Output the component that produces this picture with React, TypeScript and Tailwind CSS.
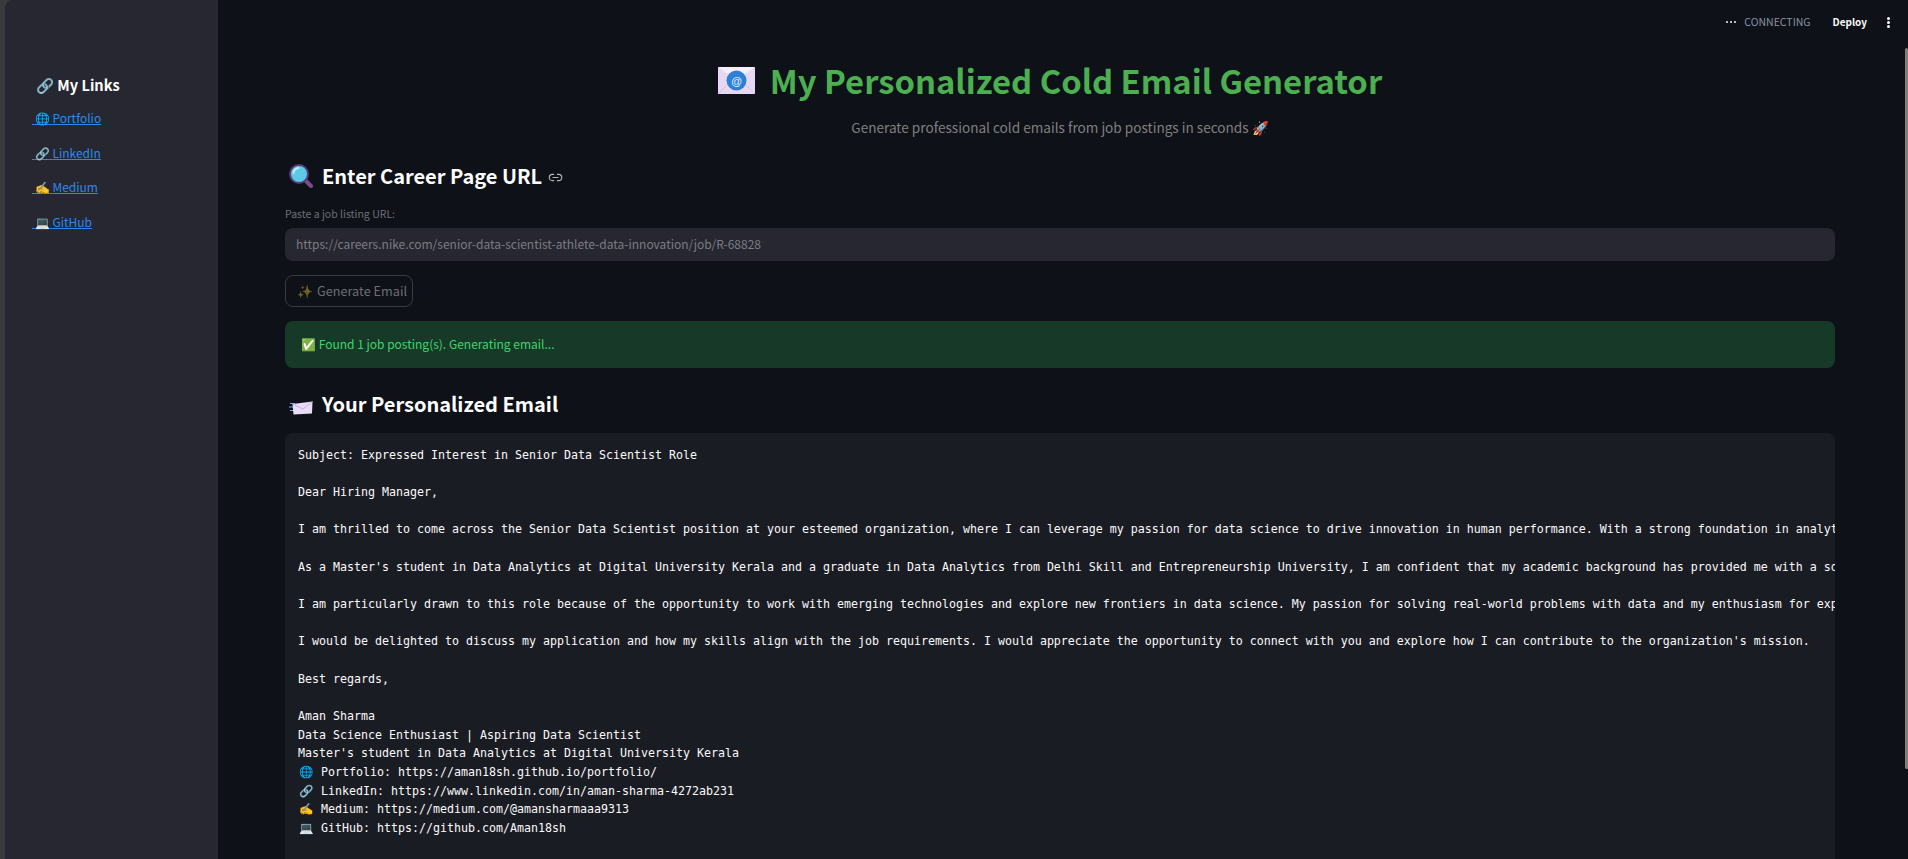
import { Link2 } from "lucide-react";

const sans = "font-['Noto_Sans_CJK_SC','Noto_Sans',sans-serif]";

const links = [
  ["🌐", "Portfolio"],
  ["🔗", "LinkedIn"],
  ["✍️", "Medium"],
  ["💻", "GitHub"],
];

const emailLines = [
  "Subject: Expressed Interest in Senior Data Scientist Role",
  "",
  "Dear Hiring Manager,",
  "",
  "I am thrilled to come across the Senior Data Scientist position at your esteemed organization, where I can leverage my passion for data science to drive innovation in human performance. With a strong foundation in analytics and machine learning, I am excited about this role.",
  "",
  "As a Master's student in Data Analytics at Digital University Kerala and a graduate in Data Analytics from Delhi Skill and Entrepreneurship University, I am confident that my academic background has provided me with a solid foundation for this position.",
  "",
  "I am particularly drawn to this role because of the opportunity to work with emerging technologies and explore new frontiers in data science. My passion for solving real-world problems with data and my enthusiasm for exploring new tools make me a strong fit.",
  "",
  "I would be delighted to discuss my application and how my skills align with the job requirements. I would appreciate the opportunity to connect with you and explore how I can contribute to the organization's mission.",
  "",
  "Best regards,",
  "",
  "Aman Sharma",
  "Data Science Enthusiast | Aspiring Data Scientist",
  "Master's student in Data Analytics at Digital University Kerala",
];

const signature = [
  ["🌐", "Portfolio: https://aman18sh.github.io/portfolio/"],
  ["🔗", "LinkedIn: https://www.linkedin.com/in/aman-sharma-4272ab231"],
  ["✍️", "Medium: https://medium.com/@amansharmaaa9313"],
  ["💻", "GitHub: https://github.com/Aman18sh"],
];

// envelope with the blue @ badge, next to the title
const MailIcon = () => (
  <svg width="37" height="27" viewBox="0 0 37 27" className="shrink-0">
    <rect x="0" y="0" width="37" height="27" rx="1" fill="#e6d8f3" />
    <path d="M0 0L18.5 13L37 0Z" fill="#f5effa" />
    <path d="M0 27L14 13M37 27L23 13" stroke="#d3c0e6" strokeWidth="1" />
    <circle cx="18.5" cy="13.5" r="10" fill="#2f7fd6" />
    <text x="18.5" y="17.5" textAnchor="middle" fontSize="11" fontFamily="Liberation Sans, sans-serif" fill="#d8ecff">@</text>
  </svg>
);

const SearchIcon = () => (
  <svg width="24" height="24" viewBox="0 0 24 24" className="shrink-0">
    <path d="M15.5 15.5L22 22" stroke="#7d4a8f" strokeWidth="4" strokeLinecap="round" />
    <circle cx="10" cy="10" r="9" fill="#5cc9e8" stroke="#5a3a78" strokeWidth="2" />
    <path d="M4.5 9a5.5 5.5 0 0 1 5-5" stroke="#bdeefa" strokeWidth="2" fill="none" strokeLinecap="round" />
  </svg>
);

// envelope with speed lines, second heading
const FastMailIcon = () => (
  <svg width="24" height="14" viewBox="0 0 24 14" className="shrink-0">
    <path d="M1 2.5h5M0 6h5M1 9.5h4" stroke="#4fb3e8" strokeWidth="1.2" />
    <path d="M3.5 3L23.5 0.5L23 12.5L4.5 13.5Z" fill="#eadcf6" />
    <path d="M3.5 3L14 8L23.5 0.5" stroke="#c7aede" strokeWidth="1" fill="none" />
  </svg>
);

export default function App() {
  return (
    <div className={`flex h-[859px] overflow-hidden bg-[#3a3a3c] pl-[5px] ${sans}`}>
      <aside className="w-[213px] shrink-0 pl-[26px] pt-[73px] bg-[#262730] rounded-tl-lg">
        <h3 className="pl-[5px] text-[14.6px] leading-[24px] font-semibold text-white">🔗 My Links</h3>
        <ul className="mt-[9px] flex flex-col gap-[10.7px]">
          {links.map(([icon, label]) => (
            <li key={label} className="pl-[1px] text-[12px] leading-[24px] text-[#3087ee] underline">&nbsp;{icon}&nbsp;{label}</li>
          ))}
        </ul>
      </aside>
      <main className="relative flex-1 min-w-0 bg-[#0e1117] pl-[67px] pr-[73px] pt-[55px]">
        <div className="absolute right-[18px] top-[14px] flex items-center">
          <span className="mr-[8px] flex gap-[2px]">
            <i className="block size-[2px] bg-[#b8bcc6]" />
            <i className="block size-[2px] bg-[#b8bcc6]" />
            <i className="block size-[2px] bg-[#b8bcc6]" />
          </span>
          <span className="text-[10.5px] leading-[16px] text-[#8a93a5]">CONNECTING</span>
          <span className="ml-[22px] text-[10px] leading-[16px] font-semibold text-[#fafafa]">Deploy</span>
          <span className="ml-[20px] flex flex-col gap-[1px]">
            <i className="block size-[3px] rounded-full bg-[#fafafa]" />
            <i className="block size-[3px] rounded-full bg-[#fafafa]" />
            <i className="block size-[3px] rounded-full bg-[#fafafa]" />
          </span>
        </div>
        <div className="absolute right-0 top-[48px] h-[721px] w-[3px] rounded-sm bg-[#808080]" />

        <h1 className="flex h-[50px] items-center justify-center gap-[15px] pr-[20px] text-[32.8px] font-bold text-[#4caf50]">
          <MailIcon />
          <span>My Personalized Cold Email Generator</span>
        </h1>
        <p className="mt-[10px] text-center text-[13.6px] leading-[24px] text-[#808080]">Generate professional cold emails from job postings in seconds 🚀</p>
        <h2 className="mt-[19px] flex h-[36px] items-center text-[20px] font-semibold text-white">
          <span className="ml-[4px]"><SearchIcon /></span>
          <span className="ml-[9px]">Enter Career Page URL</span>
          <Link2 size={15} strokeWidth={1.8} className="ml-[6px] mt-[3px] text-[#b4b4b4]" />
        </h2>
        <label className="block mt-[12px] text-[10.5px] leading-[16px] text-[#6d6f75]">Paste a job listing URL:</label>
        <div className="mt-[6px] h-[33px] flex items-center px-[11px] pb-[1px] rounded-lg bg-[#262730] text-[12px] text-[#7b7c82]">https://careers.nike.com/senior-data-scientist-athlete-data-innovation/job/R-68828</div>
        <button className="mt-[14px] flex items-center justify-center h-[32px] w-[128px] pl-[6px] rounded-lg border border-[#3a3b42] text-[12.7px] text-[#6d6f75]">
          <span className="opacity-40 mr-[4px]">✨</span>Generate Email
        </button>
        <div className="mt-[14px] h-[47px] flex items-center px-[16px] pb-[1px] rounded-lg bg-[#173928] text-[12px] text-[#3dd56d]">✅&nbsp;Found 1 job posting(s). Generating email...</div>
        <h2 className="mt-[18px] flex h-[36px] items-center text-[20px] font-semibold text-white">
          <span className="ml-[4px] mt-[8px]"><FastMailIcon /></span>
          <span className="ml-[9px]">Your Personalized Email</span>
        </h2>
        <pre className="mt-[11px] h-[500px] overflow-hidden rounded-lg bg-[#1a1c24] px-[13px] pt-[12.7px] font-['DejaVu_Sans_Mono',monospace] text-[11.63px] leading-[18.67px] text-[#fafafa]">
          {emailLines.join("\n")}
          {signature.map(([icon, text]) => (
            <div key={text}>
              <span className="inline-block w-[23px] pl-[1px]">{icon}</span>
              {text}
            </div>
          ))}
        </pre>
      </main>
    </div>
  );
}
